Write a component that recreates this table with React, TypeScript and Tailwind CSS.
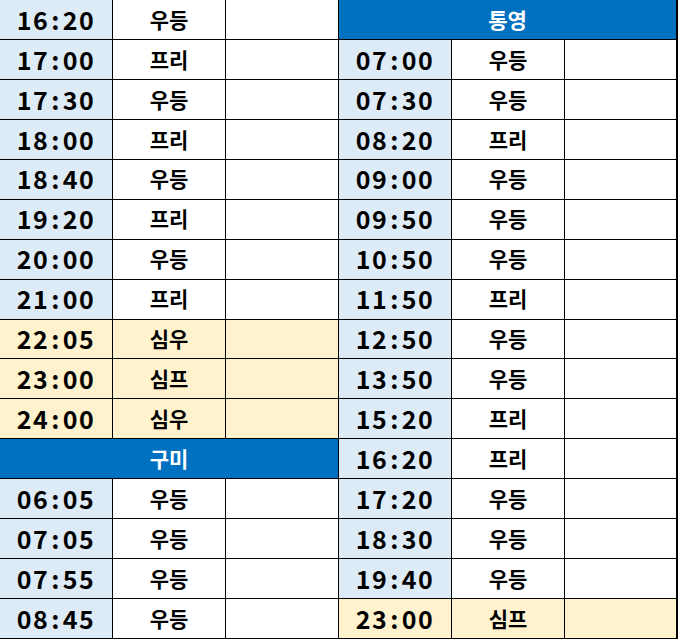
import React from "react";

type Item =
  | { kind: "head"; label: string }
  | { kind: "row"; time: string; type: string; late?: boolean };

const left: Item[] = [
  { kind: "row", time: "16:20", type: "우등" },
  { kind: "row", time: "17:00", type: "프리" },
  { kind: "row", time: "17:30", type: "우등" },
  { kind: "row", time: "18:00", type: "프리" },
  { kind: "row", time: "18:40", type: "우등" },
  { kind: "row", time: "19:20", type: "프리" },
  { kind: "row", time: "20:00", type: "우등" },
  { kind: "row", time: "21:00", type: "프리" },
  { kind: "row", time: "22:05", type: "심우", late: true },
  { kind: "row", time: "23:00", type: "심프", late: true },
  { kind: "row", time: "24:00", type: "심우", late: true },
  { kind: "head", label: "구미" },
  { kind: "row", time: "06:05", type: "우등" },
  { kind: "row", time: "07:05", type: "우등" },
  { kind: "row", time: "07:55", type: "우등" },
  { kind: "row", time: "08:45", type: "우등" },
];

const right: Item[] = [
  { kind: "head", label: "통영" },
  { kind: "row", time: "07:00", type: "우등" },
  { kind: "row", time: "07:30", type: "우등" },
  { kind: "row", time: "08:20", type: "프리" },
  { kind: "row", time: "09:00", type: "우등" },
  { kind: "row", time: "09:50", type: "우등" },
  { kind: "row", time: "10:50", type: "우등" },
  { kind: "row", time: "11:50", type: "프리" },
  { kind: "row", time: "12:50", type: "우등" },
  { kind: "row", time: "13:50", type: "우등" },
  { kind: "row", time: "15:20", type: "프리" },
  { kind: "row", time: "16:20", type: "프리" },
  { kind: "row", time: "17:20", type: "우등" },
  { kind: "row", time: "18:30", type: "우등" },
  { kind: "row", time: "19:40", type: "우등" },
  { kind: "row", time: "23:00", type: "심프", late: true },
];

function Group({ items, edge }: { items: Item[]; edge?: boolean }) {
  const lastBorder = edge ? "border-r-2" : "border-r";

  return (
    <div className="w-[339px] flex flex-col">
      {items.map((item, i) => {
        if (item.kind === "head") {
          return (
            <div
              key={i}
              className={`h-10 border-b border-black ${lastBorder} bg-[#0070c0] text-white text-[21px] font-semibold flex items-center justify-center`}
            >
              {item.label}
            </div>
          );
        }

        const timeBg = item.late ? "bg-[#fff2cc]" : "bg-[#ddebf7]";
        const restBg = item.late ? "bg-[#fff2cc]" : "bg-white";
        const [h, m] = item.time.split(":");

        return (
          <div key={i} className="h-10 flex">
            <div className={`w-[113px] border-r border-b border-black ${timeBg} flex items-center justify-center text-[25px] font-semibold tracking-[1.5px]`}>
              {h}
              <span className="px-[2px]">:</span>
              {m}
            </div>
            <div className={`w-[113px] border-r border-b border-black ${restBg} flex items-center justify-center text-[21px] font-semibold`}>
              {item.type}
            </div>
            <div className={`w-[113px] border-b border-black ${lastBorder} ${restBg}`} />
          </div>
        );
      })}
    </div>
  );
}

export default function App() {
  return (
    <div
      className="w-[683px] h-[639px] overflow-hidden bg-white text-black flex"
      style={{ fontFamily: '"Noto Sans CJK KR", "Noto Sans", sans-serif' }}
    >
      <Group items={left} />
      <Group items={right} edge />
    </div>
  );
}
